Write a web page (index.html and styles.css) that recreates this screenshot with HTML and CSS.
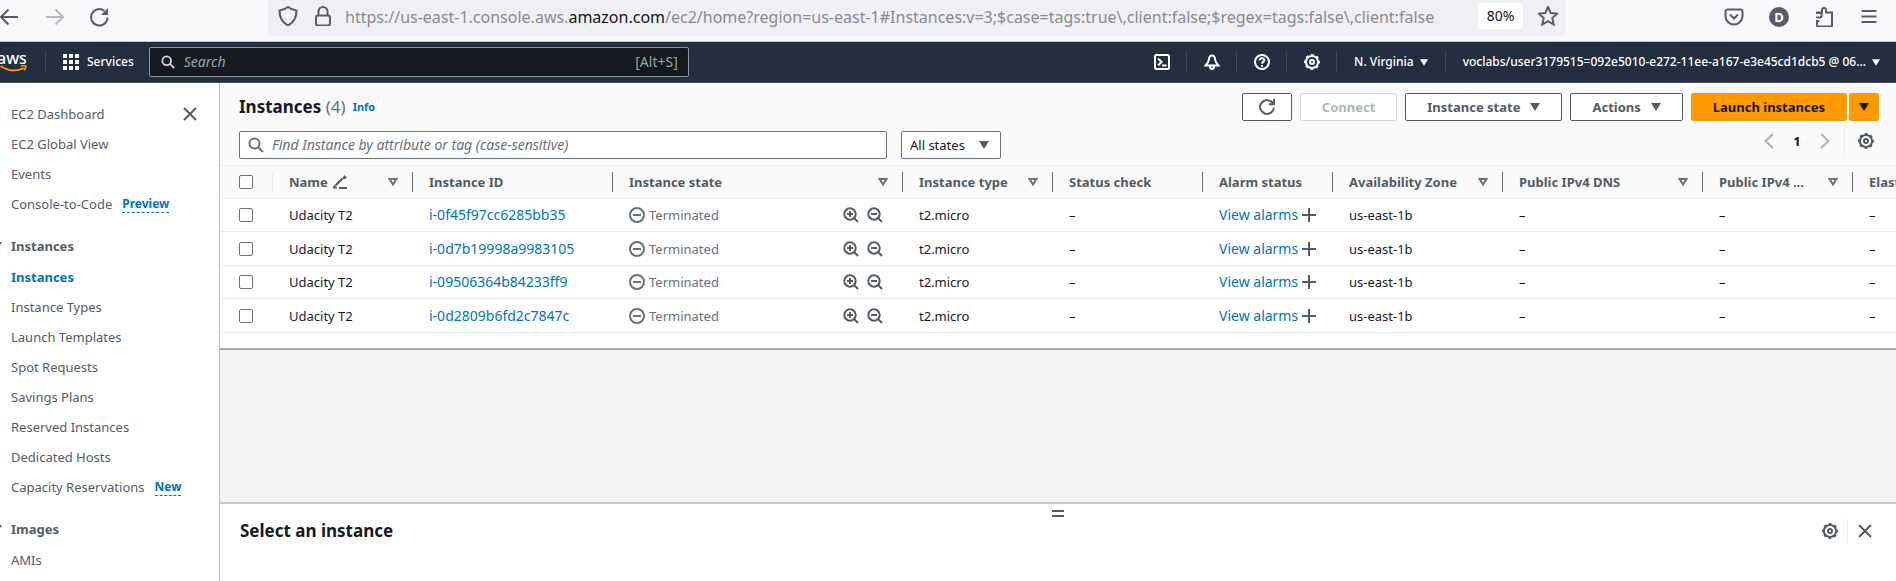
FILE: index.html
```html
<!DOCTYPE html>
<html lang="en">
<head>
<meta charset="utf-8">
<title>Instances | EC2 | us-east-1</title>
<link rel="stylesheet" href="styles.css">
</head>
<body>
<svg class="sprite" aria-hidden="true">
  <symbol id="search" viewBox="0 0 16 16"><circle cx="6.5" cy="6.5" r="5"/><path d="M10 10l5 5"/></symbol>
  <symbol id="close" viewBox="0 0 16 16"><path d="M2 2l12 12M14 2L2 14"/></symbol>
  <symbol id="gear" viewBox="0 0 16 16"><circle cx="8" cy="8" r="6.100"/><circle cx="8" cy="8" r="7" stroke-dasharray="2.750 2.750" stroke-dashoffset="1.370"/><circle cx="8" cy="8" r="2"/></symbol>
  <symbol id="refresh" viewBox="0 0 16 16"><path d="M14.900 8.500A6.900 6.900 0 1 1 12.500 2.800L15 5M15 0v5.200h-5"/></symbol>
  <symbol id="caret" viewBox="0 0 10 8"><path class="solid" d="M0 0h10L5 8z"/></symbol>
  <symbol id="sort" viewBox="0 0 10 8"><path d="M1.500 1h7L5 6.500z"/></symbol>
  <symbol id="minus-circle" viewBox="0 0 16 16"><circle cx="8" cy="8" r="7"/><path d="M4 8h8"/></symbol>
  <symbol id="zoom-in" viewBox="0 0 16 16"><circle cx="7" cy="7" r="5.700"/><path d="M11 11l4 4M4 7h6M7 4v6"/></symbol>
  <symbol id="zoom-out" viewBox="0 0 16 16"><circle cx="7" cy="7" r="5.700"/><path d="M11 11l4 4M4 7h6"/></symbol>
  <symbol id="plus" viewBox="0 0 14 14"><path d="M7 0v14M0 7h14"/></symbol>
  <symbol id="pencil" viewBox="0 0 14 14"><path d="M6 13h8M2.500 10.500l7-7"/><path class="solid" d="M0 14l1-4.500L4.500 13zM9.500 3l2-3L14 2.500l-3 2z"/></symbol>
</svg>

<div class="browser">
  <div class="browser-nav">
    <button aria-label="Back"><svg class="nav-icon" viewBox="0 0 20 20"><path d="M18 10H1M8.500 2.500L1 10l7.500 7.500"/></svg></button>
    <button class="faded" aria-label="Forward"><svg class="nav-icon" viewBox="0 0 20 20"><path d="M1 10h17M10.500 2.500L18 10l-7.500 7.500"/></svg></button>
    <button aria-label="Reload"><svg class="nav-icon" viewBox="0 0 20 20"><path d="M17.500 10.500A8.200 8.200 0 1 1 14.500 4"/><path class="solid" d="M18 1v7h-7z"/></svg></button>
  </div>
  <div class="urlbar">
    <svg class="nav-icon" viewBox="0 0 20 20"><path d="M10 1c2.500 2 5 3 8.500 3.500 0 7-2.500 12-8.500 15C4 16.500 1.500 11.500 1.500 4.500 5 4 7.500 3 10 1z"/></svg>
    <svg class="nav-icon" viewBox="0 0 20 20"><rect x="3" y="9.500" width="14" height="10" rx="2"/><path d="M5.500 9.500V5.500a4.500 4.500 0 0 1 9 0v4"/></svg>
    <div class="url">https://us-east-1.console.aws.<span class="domain">amazon.com</span>/ec2/home?region=us-east-1#Instances:v=3;$case=tags:true\,client:false;$regex=tags:false\,client:false</div>
    <button class="zoom">80%</button>
    <button aria-label="Bookmark"><svg class="nav-icon" viewBox="0 0 20 20"><path d="M10 1l2.700 6 6.500.7-4.900 4.400 1.400 6.400L10 15.200l-5.700 3.300 1.400-6.400L.8 7.700 7.300 7z"/></svg></button>
  </div>
  <div class="browser-tools">
    <button aria-label="Pocket"><svg class="tool-icon" viewBox="0 0 20 20"><path d="M3.500 2.500h13a2 2 0 0 1 2 2V9a8.500 8.500 0 0 1-17 0V4.500a2 2 0 0 1 2-2zM6 7.500l4 4 4-4"/></svg></button>
    <button class="avatar">D</button>
    <button aria-label="Extensions"><svg class="tool-icon" viewBox="0 0 20 20"><path d="M3 11v-.5h2.500a2 2 0 0 0 0-4.500H3V5.500h5V3a2 2 0 0 1 4 0v2.500h6V18.500a1 1 0 0 1-1 1H4a1 1 0 0 1-1-1V14h2.500"/></svg></button>
    <button aria-label="Menu"><svg class="tool-icon" viewBox="0 0 20 20"><path d="M2.500 4h15M2.500 9.500h15M2.500 15h15"/></svg></button>
  </div>
</div>

<header class="topnav">
  <a class="logo" href="#" aria-label="AWS home"><span>aws</span><svg viewBox="0 0 32 9"><path d="M2 1c9 6 18 6.500 26 2.500"/><path d="M25 1c3-.7 4.500-.5 5 0s0 3-1.500 5"/></svg></a>
  <button class="services"><svg viewBox="0 0 16 16"><path class="solid" d="M0 0h4v4H0zM6 0h4v4H6zM12 0h4v4h-4zM0 6h4v4H0zM6 6h4v4H6zM12 6h4v4h-4zM0 12h4v4H0zM6 12h4v4H6zM12 12h4v4h-4z"/></svg>Services</button>
  <label class="top-search"><svg class="i14"><use href="#search"/></svg><input type="search" placeholder="Search" aria-label="Search"><span>[Alt+S]</span></label>
  <div class="top-tools">
    <button aria-label="CloudShell"><svg class="i16" viewBox="0 0 16 16"><rect x="1" y="1" width="14" height="14" rx="1.500"/><path d="M4 4.500L7.500 8 4 11.500M8 11.500h4.500"/></svg></button>
    <button aria-label="Notifications"><svg class="i16" viewBox="0 0 16 16"><path d="M8 1.500C5.500 1.500 5 4 4.800 6 4.500 8.500 3.500 9.500 1.500 11.500h13c-2-2-3-3-3.300-5.500C11 4 10.500 1.500 8 1.500zM6 12c0 4 4 4 4 0"/></svg></button>
    <button aria-label="Help"><svg class="i16" viewBox="0 0 16 16"><circle cx="8" cy="8" r="7"/><path d="M5.700 6.500C5.700 3.500 10.300 3.500 10.300 6.200 10.300 8 8 7.800 8 9.700M8 11v1.700"/></svg></button>
    <button aria-label="Settings"><svg class="i16"><use href="#gear"/></svg></button>
    <button class="wide">N. Virginia <svg class="caret-sm"><use href="#caret"/></svg></button>
    <button class="wide">voclabs/user3179515=092e5010-e272-11ee-a167-e3e45cd1dcb5 @ 06... <svg class="caret-sm"><use href="#caret"/></svg></button>
  </div>
</header>

<div class="layout">
  <nav class="sidebar" aria-label="EC2">
    <button class="close" aria-label="Close navigation"><svg class="i16"><use href="#close"/></svg></button>
    <ul>
      <li><a href="#">EC2 Dashboard</a></li>
      <li><a href="#">EC2 Global View</a></li>
      <li><a href="#">Events</a></li>
      <li><a href="#">Console-to-Code</a><a class="tag" href="#">Preview</a></li>
    </ul>
    <h3><svg><use href="#caret"/></svg>Instances</h3>
    <ul>
      <li><a class="active" href="#">Instances</a></li>
      <li><a href="#">Instance Types</a></li>
      <li><a href="#">Launch Templates</a></li>
      <li><a href="#">Spot Requests</a></li>
      <li><a href="#">Savings Plans</a></li>
      <li><a href="#">Reserved Instances</a></li>
      <li><a href="#">Dedicated Hosts</a></li>
      <li><a href="#">Capacity Reservations</a><a class="tag" href="#">New</a></li>
    </ul>
    <h3><svg><use href="#caret"/></svg>Images</h3>
    <ul>
      <li><a href="#">AMIs</a></li>
    </ul>
  </nav>

  <main>
    <section class="card">
      <div class="card-head">
        <div class="title-row">
          <h1>Instances <span>(4)</span></h1><a class="info" href="#">Info</a>
          <div class="actions">
            <button class="btn refresh" aria-label="Refresh"><svg class="i16"><use href="#refresh"/></svg></button>
            <button class="btn" disabled>Connect</button>
            <button class="btn">Instance state <svg class="caret"><use href="#caret"/></svg></button>
            <button class="btn">Actions <svg class="caret"><use href="#caret"/></svg></button>
            <div class="split"><button class="btn primary">Launch instances</button><button class="btn primary drop" aria-label="More launch options"><svg class="caret"><use href="#caret"/></svg></button></div>
          </div>
        </div>
        <div class="filter-row">
          <label class="find"><svg class="i16"><use href="#search"/></svg><input type="search" placeholder="Find Instance by attribute or tag (case-sensitive)" aria-label="Find Instance"></label>
          <label class="states"><select aria-label="Instance states"><option>All states</option></select><svg class="caret"><use href="#caret"/></svg></label>
          <div class="pager">
            <button class="chev" aria-label="Previous page"><svg viewBox="0 0 10 16"><path d="M9 1L1.500 8 9 15"/></svg></button>
            <button class="page">1</button>
            <button class="chev" aria-label="Next page"><svg viewBox="0 0 10 16"><path d="M1 1l7.500 7L1 15"/></svg></button>
            <button class="prefs" aria-label="Preferences"><svg class="i16"><use href="#gear"/></svg></button>
          </div>
        </div>
      </div>
      <div class="table-wrap">
        <table>
          <colgroup><col class="c-check"><col class="c-name"><col class="c-id"><col class="c-state"><col class="c-type"><col class="c-status"><col class="c-alarm"><col class="c-zone"><col class="c-dns"><col class="c-ip"><col class="c-elastic"></colgroup>
          <thead>
            <tr>
              <th><div class="th light"><input type="checkbox" aria-label="Select all"></div></th>
              <th><div class="th"><span>Name <svg class="i14 pencil"><use href="#pencil"/></svg></span><svg class="sort"><use href="#sort"/></svg></div></th>
              <th><div class="th"><span>Instance ID</span></div></th>
              <th><div class="th"><span>Instance state</span><svg class="sort"><use href="#sort"/></svg></div></th>
              <th><div class="th"><span>Instance type</span><svg class="sort"><use href="#sort"/></svg></div></th>
              <th><div class="th"><span>Status check</span></div></th>
              <th><div class="th"><span>Alarm status</span></div></th>
              <th><div class="th"><span>Availability Zone</span><svg class="sort"><use href="#sort"/></svg></div></th>
              <th><div class="th"><span>Public IPv4 DNS</span><svg class="sort"><use href="#sort"/></svg></div></th>
              <th><div class="th"><span>Public IPv4 ...</span><svg class="sort"><use href="#sort"/></svg></div></th>
              <th><div class="th"><span>Elastic IP</span></div></th>
            </tr>
          </thead>
          <tbody>
            <tr><td><input type="checkbox" aria-label="Select i-0f45f97cc6285bb35"></td><td>Udacity T2</td><td><a href="#">i-0f45f97cc6285bb35</a></td><td><div class="state"><svg class="i16"><use href="#minus-circle"/></svg>Terminated<span class="zooms"><button aria-label="Include state"><svg class="i16"><use href="#zoom-in"/></svg></button><button aria-label="Exclude state"><svg class="i16"><use href="#zoom-out"/></svg></button></span></div></td><td>t2.micro</td><td>–</td><td><div class="alarm"><a href="#">View alarms</a><button aria-label="Add alarm"><svg class="i14"><use href="#plus"/></svg></button></div></td><td>us-east-1b</td><td>–</td><td>–</td><td>–</td></tr>
            <tr><td><input type="checkbox" aria-label="Select i-0d7b19998a9983105"></td><td>Udacity T2</td><td><a href="#">i-0d7b19998a9983105</a></td><td><div class="state"><svg class="i16"><use href="#minus-circle"/></svg>Terminated<span class="zooms"><button aria-label="Include state"><svg class="i16"><use href="#zoom-in"/></svg></button><button aria-label="Exclude state"><svg class="i16"><use href="#zoom-out"/></svg></button></span></div></td><td>t2.micro</td><td>–</td><td><div class="alarm"><a href="#">View alarms</a><button aria-label="Add alarm"><svg class="i14"><use href="#plus"/></svg></button></div></td><td>us-east-1b</td><td>–</td><td>–</td><td>–</td></tr>
            <tr><td><input type="checkbox" aria-label="Select i-09506364b84233ff9"></td><td>Udacity T2</td><td><a href="#">i-09506364b84233ff9</a></td><td><div class="state"><svg class="i16"><use href="#minus-circle"/></svg>Terminated<span class="zooms"><button aria-label="Include state"><svg class="i16"><use href="#zoom-in"/></svg></button><button aria-label="Exclude state"><svg class="i16"><use href="#zoom-out"/></svg></button></span></div></td><td>t2.micro</td><td>–</td><td><div class="alarm"><a href="#">View alarms</a><button aria-label="Add alarm"><svg class="i14"><use href="#plus"/></svg></button></div></td><td>us-east-1b</td><td>–</td><td>–</td><td>–</td></tr>
            <tr><td><input type="checkbox" aria-label="Select i-0d2809b6fd2c7847c"></td><td>Udacity T2</td><td><a href="#">i-0d2809b6fd2c7847c</a></td><td><div class="state"><svg class="i16"><use href="#minus-circle"/></svg>Terminated<span class="zooms"><button aria-label="Include state"><svg class="i16"><use href="#zoom-in"/></svg></button><button aria-label="Exclude state"><svg class="i16"><use href="#zoom-out"/></svg></button></span></div></td><td>t2.micro</td><td>–</td><td><div class="alarm"><a href="#">View alarms</a><button aria-label="Add alarm"><svg class="i14"><use href="#plus"/></svg></button></div></td><td>us-east-1b</td><td>–</td><td>–</td><td>–</td></tr>
          </tbody>
        </table>
      </div>
    </section>

    <section class="panel">
      <button class="grip" aria-label="Resize panel"></button>
      <div class="panel-head">
        <h2>Select an instance</h2>
        <button aria-label="Panel preferences"><svg class="i16"><use href="#gear"/></svg></button>
        <button class="panel-close" aria-label="Close panel"><svg class="i16"><use href="#close"/></svg></button>
      </div>
    </section>
  </main>
</div>
</body>
</html>
```
FILE: styles.css
```css
* { box-sizing: border-box; }

body {
  margin: 0;
  height: 100vh;
  display: flex;
  flex-direction: column;
  overflow: hidden;
  font: 14px/20px "Noto Sans", "Open Sans", sans-serif;
  color: #16191f;
  background: #fff;
}

button {
  display: inline-flex;
  align-items: center;
  justify-content: center;
  flex: none;
  margin: 0;
  padding: 0;
  border: 0;
  background: none;
  color: inherit;
  font: inherit;
}

a { color: #0073bb; text-decoration: none; }
h1, h2, h3, ul { margin: 0; padding: 0; }
ul { list-style: none; }

svg { display: block; flex: none; fill: none; stroke: currentColor; stroke-width: 2; }
.sprite { display: none; }
.solid { fill: currentColor; stroke: none; }
.i16 { width: 16px; height: 16px; }
.i14 { width: 14px; height: 14px; }
.caret { width: 10px; height: 8px; }
.caret-sm { width: 8px; height: 7px; }

/* Browser toolbar */
.browser {
  display: flex;
  flex: none;
  height: 42px;
  background: #f9f9fb;
  border-bottom: 1px solid #c4c6cc;
  color: #5b5b66;
}
.nav-icon { width: 20px; height: 20px; }
.tool-icon { width: 20px; height: 20px; }
.browser-nav { display: flex; align-items: center; gap: 25px; width: 268px; padding-bottom: 8px; }
.faded { opacity: 0.4; }
.urlbar {
  display: flex;
  align-items: center;
  flex: 1;
  min-width: 0;
  height: 36px;
  padding: 0 8px 4px 10px;
  border-radius: 0 0 5px 5px;
  background: #f0f0f4;
}
.urlbar .nav-icon + .nav-icon { margin-left: 15px; }
.url {
  flex: 1;
  min-width: 0;
  margin-left: 12px;
  overflow: hidden;
  font-size: 16px;
  line-height: 26px;
  padding-top: 2px;
  color: #8b8a91;
  white-space: nowrap;
}
.domain { color: #15141a; }
.zoom {
  width: 45px;
  height: 26px;
  margin-right: 15px;
  border-radius: 4px;
  background: #fff;
  color: #15141a;
  font-size: 14px;
}
.browser-tools { display: flex; align-items: center; gap: 25px; padding: 0 17px 8px 158px; }
.avatar {
  width: 20px;
  height: 20px;
  border-radius: 50%;
  background: #5b5b66;
  color: #fff;
  font-size: 13px;
  font-weight: 700;
}

/* AWS header */
.topnav {
  display: flex;
  align-items: center;
  flex: none;
  height: 41px;
  background: #232f3e;
  border-bottom: 1px solid #414d5c;
  color: #fff;
  font-size: 12px;
  font-weight: 500;
}
.logo {
  display: flex;
  flex-direction: column;
  width: 46px;
  height: 22px;
  border-right: 1px solid #414750;
  color: #fff;
}
.logo span { margin-left: -3px; font-size: 16px; line-height: 14px; font-weight: 500; }
.logo svg { width: 32px; height: 8px; margin-left: -3px; color: #f90; }
.services { gap: 8px; margin: 0 15px 0 17px; font-size: 12px; }
.services svg { width: 16px; height: 16px; }
.top-search {
  display: flex;
  align-items: center;
  gap: 9px;
  width: 540px;
  height: 30px;
  padding: 0 10px 0 11px;
  border: 1px solid #879596;
  border-radius: 2px;
  background: #16191f;
  color: #95a5a6;
  font-size: 14px;
  font-weight: 400;
}
.top-search svg { color: #d5dbdb; }
input[type="search"] {
  flex: 1;
  min-width: 0;
  padding: 0;
  border: 0;
  outline: 0;
  background: none;
  color: inherit;
  font: inherit;
  appearance: none;
}
input::placeholder { color: inherit; opacity: 1; font-style: italic; }
.top-tools { display: flex; margin-left: auto; }
.top-tools button { width: 50px; height: 22px; border-right: 1px solid #414750; }
.top-tools .wide { gap: 6px; width: auto; padding: 0 17px; white-space: nowrap; }
.top-tools .wide:last-child { padding-right: 16px; border: 0; }

/* Page layout */
.layout { display: flex; flex: 1; min-height: 0; }
.sidebar {
  position: relative;
  flex: none;
  width: 220px;
  padding-top: 16px;
  border-right: 1px solid #b8bec3;
  overflow: hidden;
  color: #545b64;
}
.sidebar li { display: flex; align-items: center; gap: 10px; height: 30px; padding-left: 11px; white-space: nowrap; }
.sidebar li a { color: #545b64; font-size: 13px; }
.sidebar li .active { color: #0073bb; font-weight: 700; }
.sidebar li .tag { color: #0073bb; font-size: 12px; line-height: 17px; font-weight: 700; border-bottom: 1px dashed #0073bb; }
.sidebar h3 { display: flex; align-items: center; gap: 9px; margin-left: -8px; padding: 17px 0 6px; font-size: 13px; line-height: 20px; }
.sidebar h3 svg { width: 10px; height: 8px; }
.close { position: absolute; top: 23px; right: 21px; }

main { display: flex; flex: 1; flex-direction: column; min-width: 0; background: #f1f3f3; }
.card { padding-bottom: 15px; border-bottom: 2px solid #a2acad; background: #fff; }
.card-head { padding: 10px 17px 6px 19px; background: #fafafa; }
.title-row { display: flex; align-items: center; }
h1 { font-size: 17px; line-height: 24px; }
h1 span { color: #687078; font-weight: 400; }
.info { margin-left: 7px; font-size: 11px; font-weight: 700; }
.actions { display: flex; gap: 8px; margin-left: auto; }
.btn {
  gap: 10px;
  height: 28px;
  padding: 0 21px;
  border: 1px solid #545b64;
  border-radius: 2px;
  background: #fff;
  color: #545b64;
  font-size: 13px;
  font-weight: 700;
}
.refresh { width: 50px; padding: 0; }
.btn:disabled { border-color: #d5dbdb; color: #aab7b8; }
.split { display: flex; gap: 2px; }
.primary { border-color: #f90; background: #f90; color: #16191f; }
.drop { width: 30px; padding: 0; }

.filter-row { display: flex; align-items: flex-end; padding-top: 6px; }
.find {
  display: flex;
  align-items: center;
  flex: 0 1 648px;
  gap: 8px;
  height: 28px;
  padding: 0 8px;
  border: 1px solid #687078;
  border-radius: 2px;
  background: #fff;
  color: #687078;
  font-size: 14px;
}
.states { display: grid; align-items: center; width: 100px; margin-left: 14px; }
.states > * { grid-area: 1 / 1; }
.states svg { justify-self: end; margin-right: 12px; color: #545b64; pointer-events: none; }
select {
  width: 100%;
  height: 28px;
  padding: 0 8px;
  border: 1px solid #687078;
  border-radius: 2px;
  background: #fff;
  color: #16191f;
  font: inherit;
  font-size: 13px;
  appearance: none;
}
.pager { display: flex; align-items: center; height: 28px; margin: 0 0 4px auto; color: #16191f; font-size: 13px; font-weight: 700; }
.chev { color: #aab7b8; }
.chev svg { width: 10px; height: 16px; }
.page { width: 46px; }
.prefs { height: 28px; margin-left: 14px; padding: 0 5px 0 13px; border-left: 1px solid #eaeded; color: #545b64; }

/* Instance table */
.table-wrap { overflow: hidden; }
table { width: 1783px; table-layout: fixed; border-collapse: separate; border-spacing: 0; font-size: 13px; }
.c-check { width: 53px; }
.c-name { width: 140px; }
.c-id { width: 200px; }
.c-state { width: 290px; }
.c-type, .c-status, .c-ip { width: 150px; }
.c-alarm { width: 130px; }
.c-zone { width: 170px; }
.c-dns { width: 200px; }
th { height: 34px; padding: 0; border: solid #eaeded; border-width: 1px 0; background: #fafafa; color: #545b64; text-align: left; }
.th { display: flex; align-items: center; justify-content: space-between; height: 20px; padding: 0 14px 0 16px; border-right: 1px solid #687078; white-space: nowrap; }
.th span { display: flex; align-items: center; gap: 5px; }
.light { padding-left: 19px; border-color: #eaeded; }
.sort { width: 10px; height: 8px; color: #687078; }
.pencil { width: 14px; height: 14px; }
td { height: 33px; padding: 0 0 0 16px; border-bottom: 1px solid #eaeded; white-space: nowrap; }
td a { font-size: 14px; }
tr:nth-child(even) td { height: 34px; }
td:first-child { padding-left: 19px; }
input[type="checkbox"] { display: block; width: 14px; height: 14px; margin: 0; border: 1px solid #687078; border-radius: 2px; background: #fff; appearance: none; }
.state { display: flex; align-items: center; gap: 4px; color: #687078; }
.zooms { display: flex; gap: 8px; margin: 0 20px 0 auto; color: #545b64; }
.alarm { display: flex; align-items: center; gap: 4px; color: #545b64; }

/* Split panel */
.panel { margin-top: auto; height: 79px; border-top: 2px solid #c4cacb; background: #fff; }
.grip { display: block; width: 12px; height: 7px; margin: 6px auto 0; border: solid #545b64; border-width: 2px 0; }
.panel-head { display: flex; align-items: center; height: 28px; padding: 0 23px 0 20px; color: #545b64; }
h2 { margin-right: auto; color: #16191f; font-size: 17px; line-height: 24px; }
.panel-close { height: 24px; margin-left: 9px; padding-left: 9px; border-left: 1px solid #eaeded; }
```
